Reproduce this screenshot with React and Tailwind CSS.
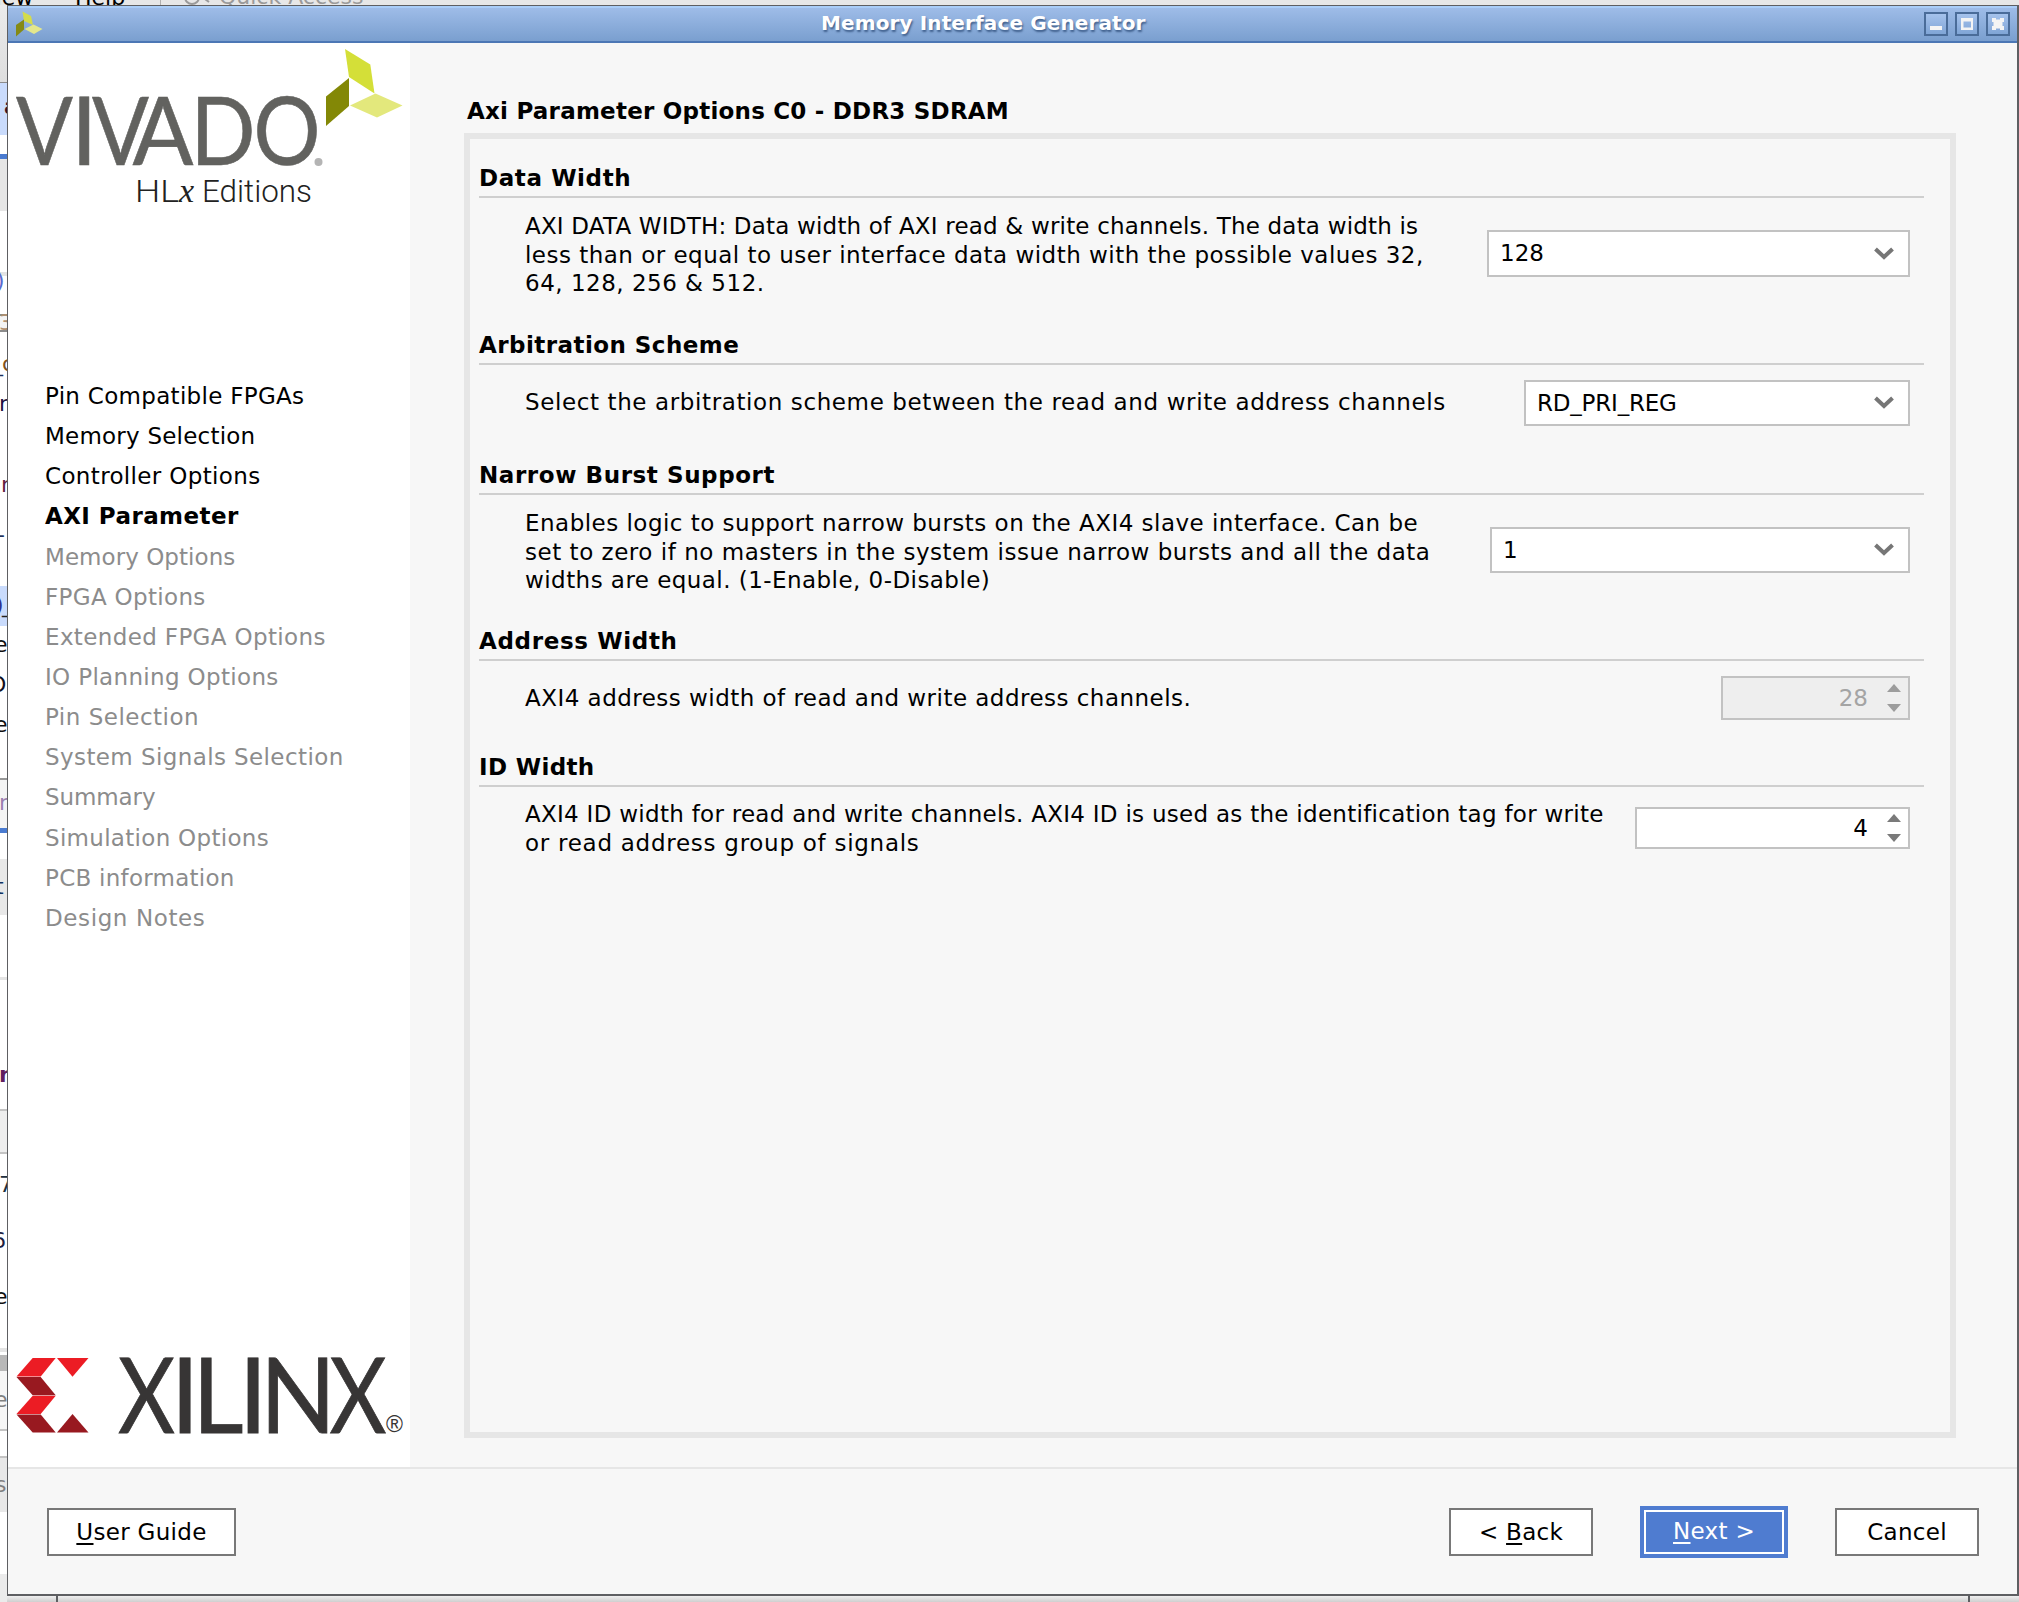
import React from 'react';

const steps = [
  ['Pin Compatible FPGAs', 'done', 'tracking-[0.3px]'],
  ['Memory Selection', 'done', 'tracking-[0.22px]'],
  ['Controller Options', 'done', 'tracking-[0.35px]'],
  ['AXI Parameter', 'current', 'tracking-[0.42px]'],
  ['Memory Options', 'todo', 'tracking-[0.05px]'],
  ['FPGA Options', 'todo', 'tracking-[0.33px]'],
  ['Extended FPGA Options', 'todo', 'tracking-[0.36px]'],
  ['IO Planning Options', 'todo', 'tracking-[0.33px]'],
  ['Pin Selection', 'todo', 'tracking-[0.5px]'],
  ['System Signals Selection', 'todo', 'tracking-[0.4px]'],
  ['Summary', 'todo', 'tracking-[-0.1px]'],
  ['Simulation Options', 'todo', 'tracking-[0.3px]'],
  ['PCB information', 'todo', 'tracking-[0.26px]'],
  ['Design Notes', 'todo', 'tracking-[0.6px]'],
];

const stepStyle = {
  done: 'text-black',
  current: 'font-bold text-black',
  todo: 'text-[#8c8c8c]',
};

/* Horizontal bands of the application behind the dialog, top to bottom */
const bands = [
  'h-[82px] bg-gradient-to-b from-[#ececec] to-[#dedede]',
  'h-px bg-[#8c8c8c]',
  'h-[52px] bg-[#c9dbfc]',
  'h-[19px] bg-white',
  'h-[5px] bg-[#4a7bd0]',
  'h-[52px] bg-[#e6e6e6]',
  'h-[61px] bg-white',
  'h-[4px] bg-[#e4e4e4]',
  'h-[38px] bg-white',
  'h-[2px] bg-[#8c8c8c]',
  'h-[14px] bg-[#f4f4f4]',
  'h-[2px] bg-[#8c8c8c]',
  'h-[254px] bg-white',
  'h-[40px] bg-[#c9dbfc]',
  'h-[152px] bg-white',
  'h-[2px] bg-[#999999]',
  'h-[48px] bg-[#f4f4f4]',
  'h-[5px] bg-[#4a7bd0]',
  'h-[26px] bg-white',
  'h-[56px] bg-[#e8e8e8]',
  'h-[62px] bg-white',
  'h-[3px] bg-[#e4e4e4]',
  'h-[129px] bg-white',
  'h-[2px] bg-[#c4c4c4]',
  'h-[41px] bg-[#eeeeee]',
  'h-[2px] bg-[#c4c4c4]',
  'h-[194px] bg-white',
  'h-[4px] bg-[#e4e4e4]',
  'h-[3px] bg-white',
  'h-[16px] bg-[#b8b8b8]',
  'h-[58px] bg-[#f6f6f6]',
  'h-[2px] bg-[#c4c4c4]',
  'h-[25px] bg-white',
  'h-[2px] bg-[#c4c4c4]',
  'h-[54px] bg-[#e8e8e8]',
  'h-[62px] bg-white',
  'h-[28px] bg-[#ebebeb]',
];

const fragments = [
  ['a', 'top-[93px] left-[4px] font-bold text-[#3a1020]'],
  [')', 'top-[267px] left-[-4px] text-[#5a6ad0]'],
  ['3', 'top-[309px] left-[-1px] text-[#b09070] text-[18px]'],
  ['_', 'top-[350px] left-[-8px] text-[#20305a]'],
  ['c', 'top-[350px] left-[2px] text-[#805020]'],
  ['r', 'top-[390px] left-[-1px] text-[#201040]'],
  ['r', 'top-[471px] left-[1px] text-[#602040]'],
  ['-', 'top-[521px] left-[-3px] text-[#20305a]'],
  [')', 'top-[591px] left-[-5px] text-[#303090]'],
  ['_', 'top-[591px] left-[2px] text-[#202020]'],
  ['e', 'top-[631px] left-[-6px] text-[#101010]'],
  ['O', 'top-[671px] left-[-11px] text-[#101020]'],
  ['e', 'top-[711px] left-[-6px] text-[#101010]'],
  ['r', 'top-[789px] left-[-1px] text-[#9a80b0]'],
  ['t', 'top-[873px] left-[-5px] text-[#103060]'],
  ['n', 'top-[1061px] left-[-1px] font-bold text-[#602060]'],
  ['7', 'top-[1171px] left-[-1px] text-[#203040]'],
  ['6', 'top-[1227px] left-[-8px] text-[#202040]'],
  ['e', 'top-[1283px] left-[-6px] text-[#101010]'],
  ['e', 'top-[1386px] left-[-6px] text-[#808080]'],
  ['s', 'top-[1471px] left-[-5px] text-[#808080]'],
];

function Backdrop() {
  return (
    <>
      <div className="absolute left-0 top-0 h-[1602px] w-[8px] overflow-hidden">
        {bands.map((b, i) => (
          <div key={i} className={b} />
        ))}
        {fragments.map(([t, c], i) => (
          <span key={i} className={`absolute text-[22px] leading-[28px] ${c}`}>
            {t}
          </span>
        ))}
      </div>
      <div className="absolute left-0 top-0 h-[5px] w-full overflow-hidden bg-[#e7e7e7] text-[22px] leading-[26px]">
        <span className="absolute left-[-19px] top-[-15px] text-black">View</span>
        <span className="absolute left-[75px] top-[-15px] text-black">Help</span>
        <span className="absolute left-[160px] top-0 h-[5px] w-px bg-[#b0b0b0]" />
        <svg className="absolute left-[184px] top-[-10px]" width="28" height="18" viewBox="0 0 28 18" fill="none" stroke="#9a9a9a" strokeWidth="2">
          <circle cx="8" cy="7" r="7" />
          <path d="M21 9l4 3" />
        </svg>
        <span className="absolute left-[219px] top-[-16px] text-[#9a9a9a]">Quick Access</span>
      </div>
    </>
  );
}

function TitleButton({ children, className = '' }) {
  return (
    <span className={`block size-[24px] border-2 border-[#4a6c99] bg-gradient-to-b from-[#a5c2ec] to-[#80a5d6] ${className}`}>
      <svg width="20" height="20" viewBox="0 0 20 20" className="block">
        {children}
      </svg>
    </span>
  );
}

function TitleBar() {
  return (
    <header className="flex h-[37px] shrink-0 items-center border-b-2 border-[#4c77b5] border-t-2 border-t-[#a9cdf8] bg-gradient-to-b from-[#9ebce8] to-[#7a9fcf] pb-px">
      <svg width="28" height="28" viewBox="0 0 28 28" className="ml-[7px]">
        <path d="M7.500 1.500L16 6l2 9-9-4z" fill="#d4dc4c" />
        <path d="M1 15l8-5.500v10L1 26.500z" fill="#858a14" />
        <path d="M9.500 19l9-4.500 9 4.500-8.500 5z" fill="#e3e78c" />
      </svg>
      <h1 className="mb-[2px] ml-[778px] whitespace-nowrap text-[20px] font-bold leading-[24px] tracking-[0.12px] text-white [text-shadow:1px_2px_2px_#3f5f8c]">
        Memory Interface Generator
      </h1>
      <div className="ml-auto mr-[7px] flex gap-[7px]">
        <TitleButton>
          <rect x="4" y="12" width="12" height="4" fill="#f4f4f4" />
        </TitleButton>
        <TitleButton>
          <path d="M4 4h12v12H4zM6.500 7.500v6h7.500v-6z" fill="#f4f4f4" fillRule="evenodd" />
        </TitleButton>
        <TitleButton>
          <path d="M4 4h4v1.500h4V4h4v4h-1.500v4H16v4h-4v-1.500H8V16H4v-4h1.500V8H4z" fill="#f4f4f4" />
        </TitleButton>
      </div>
    </header>
  );
}

function VivadoLogo() {
  return (
    <svg width="402" height="180" viewBox="8 43 402 180" className="block shrink-0">
      <g fill="#62625f" stroke="#62625f" strokeWidth="0.6" fontFamily="Lato" fontSize="95">
        <text x="16" y="165" textLength="57" lengthAdjust="spacingAndGlyphs">V</text>
        <text x="71" y="165">I</text>
        <text x="92" y="165" textLength="57" lengthAdjust="spacingAndGlyphs">V</text>
        <text x="132.500" y="165" textLength="61" lengthAdjust="spacingAndGlyphs">A</text>
        <text x="190.500" y="165" textLength="65" lengthAdjust="spacingAndGlyphs">D</text>
        <text x="253.500" y="165" textLength="67" lengthAdjust="spacingAndGlyphs">O</text>
      </g>
      <circle cx="318.500" cy="162" r="4" fill="#b4b4b4" />
      <g fill="#222222" fontFamily="Roboto" fontWeight="300" fontSize="32">
        <text x="135" y="202" textLength="44" lengthAdjust="spacingAndGlyphs">HL</text>
        <text x="179" y="202" fontFamily="Liberation Serif" fontStyle="italic" fontWeight="400" fontSize="34">x</text>
        <text x="202" y="202" textLength="110" lengthAdjust="spacingAndGlyphs">Editions</text>
      </g>
      <path d="M345 49l25.300 15.500L374.500 93.500 349 77z" fill="#d4df38" />
      <path d="M326 96.500L349 78v28l-23 20z" fill="#838806" />
      <path d="M350 105.500L375.500 93.500l27 12-25.500 12z" fill="#e3e87c" />
    </svg>
  );
}

function XilinxLogo() {
  return (
    <svg width="402" height="110" viewBox="8 1349 402 110" className="block shrink-0">
      <g fill="#ec1c24">
        <path d="M16.500 1377.500L32.700 1359h23L40.700 1377.500z" />
        <path d="M32.700 1396.700h23L40.700 1415H16.500z" />
        <path d="M57 1359h31.500L72.500 1377.700z" />
      </g>
      <g fill="#981920">
        <path d="M16.500 1378h24.200l15 18.300h-23z" />
        <path d="M16.500 1415.500h24.200L55.700 1433.500h-23z" />
        <path d="M72.500 1415l16 18.500H57z" />
      </g>
      <g fill="#373535" fontFamily="Lato" fontSize="104">
        <g stroke="#373535" strokeWidth="0.800">
          <text x="118" y="1433.500" textLength="57" lengthAdjust="spacingAndGlyphs">X</text>
          <text x="170.500" y="1433.500">I</text>
          <text x="192.500" y="1433.500" textLength="51" lengthAdjust="spacingAndGlyphs">L</text>
          <text x="238.500" y="1433.500">I</text>
          <text x="260" y="1433.500" textLength="76" lengthAdjust="spacingAndGlyphs">N</text>
          <text x="329.500" y="1433.500" textLength="57" lengthAdjust="spacingAndGlyphs">X</text>
        </g>
        <text x="386" y="1433" fontFamily="Liberation Sans" fontSize="23">®</text>
      </g>
    </svg>
  );
}

function Sidebar() {
  return (
    <aside className="flex w-[402px] shrink-0 flex-col bg-white">
      <VivadoLogo />
      <ul className="mt-[153px] flex flex-col pl-[37px]">
        {steps.map(([label, state, tracking]) => (
          <li key={label} className={`h-[40.15px] whitespace-nowrap text-[23px] leading-[40.15px] ${stepStyle[state]} ${tracking}`}>
            {label}
          </li>
        ))}
      </ul>
      <div className="mt-auto pb-[9px]">
        <XilinxLogo />
      </div>
    </aside>
  );
}

function Section({ title, className, titleClass = '', children }) {
  return (
    <section className={className}>
      <h3 className={`h-[35px] whitespace-nowrap border-b-2 border-[#cfcfcf] font-bold leading-[30px] ${titleClass}`}>{title}</h3>
      <div className="flex items-start justify-between pl-[46px] pr-[14px]">{children}</div>
    </section>
  );
}

/* Each row is [text, tracking class] */
function Lines({ rows, className }) {
  return (
    <p className={`leading-[28.7px] ${className}`}>
      {rows.map(([t, c]) => (
        <span key={t} className={`block whitespace-nowrap ${c}`}>
          {t}
        </span>
      ))}
    </p>
  );
}

function Combo({ value, className }) {
  return (
    <div className={`flex items-center justify-between border-2 border-[#c2c2c2] bg-white pl-[11px] pr-[14px] ${className}`}>
      <span>{value}</span>
      <svg width="20" height="14" viewBox="0 0 20 14" fill="none" stroke="#767676" strokeWidth="4">
        <path d="M1.500 2L10 10 18.500 2" />
      </svg>
    </div>
  );
}

function Spin({ value, disabled, className }) {
  return (
    <div className={`flex items-center justify-end border-2 border-[#c2c2c2] pr-[7px] ${disabled ? 'bg-[#eeeeee] text-[#a4a4a4]' : 'bg-white text-black'} ${className}`}>
      <span>{value}</span>
      <svg width="14" height="28" viewBox="0 0 14 28" className={disabled ? 'ml-[19px] fill-[#9c9c9c]' : 'ml-[19px] fill-[#7a7a7a]'}>
        <path d="M0 8L7 0l7 8zM0 20h14l-7 8z" />
      </svg>
    </div>
  );
}

function Content() {
  return (
    <main className="flex min-w-0 flex-1 flex-col bg-[#f7f7f7] pl-[54px] pr-[61px]">
      <h2 className="mt-[53px] h-[37px] whitespace-nowrap pl-[3px] font-bold leading-[30px] tracking-[0.22px] text-black">
        Axi Parameter Options C0 - DDR3 SDRAM
      </h2>
      <div className="h-[1305px] border-[6px] border-[#e6e6e6] pl-[9px] pr-[26px] pt-[24px]">
        <Section title="Data Width" titleClass="tracking-[0.6px]" className="h-[167px]">
          <Lines
            className="mt-[14px]"
            rows={[
              ['AXI DATA WIDTH: Data width of AXI read & write channels. The data width is', 'tracking-[0.19px]'],
              ['less than or equal to user interface data width with the possible values 32,', 'tracking-[0.48px]'],
              ['64, 128, 256 & 512.', 'tracking-[0.5px]'],
            ]}
          />
          <Combo value="128" className="mt-[32px] h-[47px] w-[423px]" />
        </Section>
        <Section title="Arbitration Scheme" titleClass="tracking-[0.45px]" className="h-[130px]">
          <Lines
            className="mt-[23px]"
            rows={[['Select the arbitration scheme between the read and write address channels', 'tracking-[0.61px]']]}
          />
          <Combo value="RD_PRI_REG" className="mt-[15px] h-[46px] w-[386px] tracking-[-0.2px]" />
        </Section>
        <Section title="Narrow Burst Support" titleClass="tracking-[0.58px]" className="h-[166px]">
          <Lines
            className="mt-[14px]"
            rows={[
              ['Enables logic to support narrow bursts on the AXI4 slave interface. Can be', 'tracking-[0.48px]'],
              ['set to zero if no masters in the system issue narrow bursts and all the data', 'tracking-[0.53px]'],
              ['widths are equal. (1-Enable, 0-Disable)', 'tracking-[0.45px]'],
            ]}
          />
          <Combo value="1" className="mt-[32px] h-[46px] w-[420px]" />
        </Section>
        <Section title="Address Width" titleClass="tracking-[0.65px]" className="h-[126px]">
          <Lines
            className="mt-[23px]"
            rows={[['AXI4 address width of read and write address channels.', 'tracking-[0.47px]']]}
          />
          <Spin value="28" disabled className="mt-[15px] h-[44px] w-[189px]" />
        </Section>
        <Section title="ID Width" titleClass="tracking-[0.35px]" className="h-[127px]">
          <Lines
            className="mt-[13px]"
            rows={[
              ['AXI4 ID width for read and write channels. AXI4 ID is used as the identification tag for write', 'tracking-[0.28px]'],
              ['or read address group of signals', 'tracking-[0.73px]'],
            ]}
          />
          <Spin value="4" className="mt-[20px] h-[42px] w-[275px]" />
        </Section>
      </div>
    </main>
  );
}

function Button({ children, className = '' }) {
  return (
    <button className={`h-[48px] whitespace-nowrap border-2 border-[#787878] bg-white leading-[36px] tracking-[0.3px] text-black ${className}`}>
      {children}
    </button>
  );
}

function Key({ children }) {
  return <span className="underline decoration-2 underline-offset-[3px]">{children}</span>;
}

function Footer() {
  return (
    <footer className="flex h-[127px] shrink-0 items-center border-t-2 border-[#e6e6e6] bg-[#f7f7f7] pl-[39px] pr-[38px]">
      <Button className="w-[189px]">
        <Key>U</Key>ser Guide
      </Button>
      <Button className="ml-auto w-[144px]">
        &lt; <Key>B</Key>ack
      </Button>
      <button className="ml-[47px] h-[52px] w-[148px] bg-[#4f7cd0] p-[4px] tracking-[0.3px] text-white">
        <span className="block h-[44px] border-2 border-white leading-[38px]">
          <Key>N</Key>ext &gt;
        </span>
      </button>
      <Button className="ml-[47px] w-[144px]">Cancel</Button>
    </footer>
  );
}

export default function App() {
  return (
    <div className="relative h-[1602px] w-[2019px] overflow-hidden bg-[#e7e7e7] font-['DejaVu_Sans',sans-serif] text-[23px] text-black">
      <Backdrop />
      <div className="relative ml-[7px] flex h-[1602px] flex-col pt-[5px]">
        <div className="flex h-[1591px] flex-col border-b-2 border-l border-r-2 border-t border-[#5e5f62]">
          <TitleBar />
          <div className="flex min-h-0 flex-1">
            <Sidebar />
            <Content />
          </div>
          <Footer />
        </div>
        <div className="flex flex-1 bg-gradient-to-b from-[#efefef] to-[#cfcfcf]">
          <div className="w-[51px] border-r-2 border-[#5e5f62]" />
          <div className="flex-1" />
          <div className="w-[51px] border-l-2 border-[#5e5f62]" />
        </div>
      </div>
    </div>
  );
}
